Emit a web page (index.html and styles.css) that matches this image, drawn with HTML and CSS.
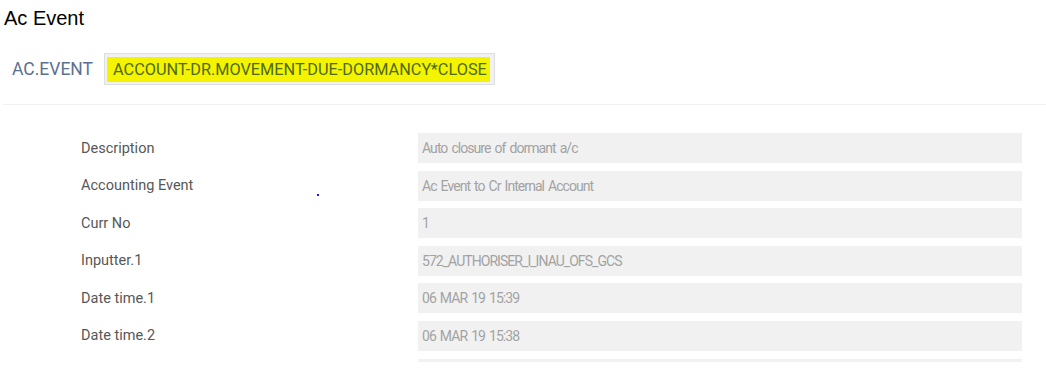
FILE: index.html
```html
<!DOCTYPE html>
<html>
<head>
    <title>Ac Event</title>
    <link rel="stylesheet" href="styles.css">
</head>
<body>
    <h1 class="page-title">Ac Event</h1>

    <div class="record-head">
        <span class="record-label">AC.EVENT</span>
        <span class="record-id"><mark>ACCOUNT-DR.MOVEMENT-DUE-DORMANCY*CLOSE</mark></span>
    </div>

    <div class="fields">
        <div class="field">
            <div class="field-label">Description</div>
            <div class="field-value">Auto closure of dormant a/c</div>
        </div>
        <div class="field">
            <div class="field-label">Accounting Event</div>
            <div class="field-value">Ac Event to Cr Internal Account</div>
        </div>
        <div class="field">
            <div class="field-label">Curr No</div>
            <div class="field-value">1</div>
        </div>
        <div class="field">
            <div class="field-label">Inputter.1</div>
            <div class="field-value">572_AUTHORISER_I_INAU_OFS_GCS</div>
        </div>
        <div class="field">
            <div class="field-label">Date time.1</div>
            <div class="field-value">06 MAR 19 15:39</div>
        </div>
        <div class="field">
            <div class="field-label">Date time.2</div>
            <div class="field-value">06 MAR 19 15:38</div>
        </div>
        <div class="field">
            <div class="field-label"></div>
            <div class="field-value cut"></div>
        </div>
    </div>

    <!-- stray cursor dot from the capture -->
    <span class="dot"></span>
</body>
</html>
```

FILE: styles.css
```css
body {
    margin: 0;
    background-color: #fff;
    font-family: Roboto, "Liberation Sans", sans-serif;
    height: 373px;
    overflow: hidden;
    position: relative;
}

.page-title {
    font-family: "Liberation Sans", Arial, sans-serif;
    font-weight: normal;
    font-size: 20px;
    color: #000;
    margin: 0;
    padding: 6px 0 0 4px;
    line-height: 24px;
}

/* Record id header */
.record-head {
    display: flex;
    align-items: center;
    margin: 23px 0 0 3px;
    padding: 0 0 19px 9px;
    border-bottom: 1px solid #f0f0f0;
}

.record-label {
    color: #5b7191;
    font-size: 17.5px;
    width: 92px;
}

.record-id {
    display: flex;
    align-items: center;
    height: 30px;
    padding: 0 4px 0 2px;
    background-color: #f1f1f1;
    border: 1px solid #dedede;
}

.record-id mark {
    background-color: #f4f400;
    color: #4f6a12;
    font-size: 16.3px;
    line-height: 25px;
    padding: 0 3px 0 6px;
}

/* Field rows */
.fields {
    display: flex;
    flex-direction: column;
    gap: 7.6px;
    padding-top: 28px;
}

.field {
    display: flex;
    align-items: center;
}

.field-label {
    width: 337px;
    padding-left: 81px;
    font-size: 14.5px;
    color: #575757;
}

.field-value {
    width: 600px;
    height: 30px;
    line-height: 30px;
    padding-left: 4px;
    background-color: #f1f1f1;
    color: #a3a3a3;
    font-size: 14px;
    letter-spacing: -0.95px;
    word-spacing: 1.5px;
}

.field-value.cut {
    height: 3px;
}

.dot {
    position: absolute;
    left: 317px;
    top: 194px;
    width: 2px;
    height: 2px;
    background-color: #1a1aff;
}
```
